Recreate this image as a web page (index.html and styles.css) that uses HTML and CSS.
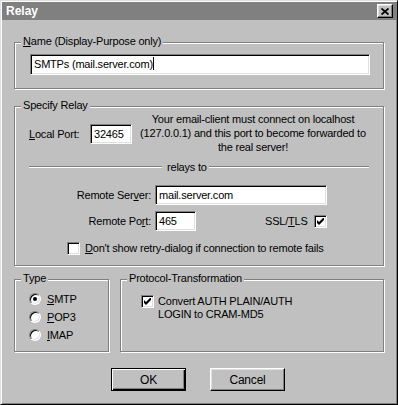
FILE: index.html
```html
<!DOCTYPE html>
<html lang="en">
<head>
    <meta charset="UTF-8">
    <title>Relay</title>
    <link rel="stylesheet" href="styles.css">
</head>
<body>
    <div class="window">
        <div class="titlebar">
            <span class="title">Relay</span>
            <div class="close">
                <svg viewBox="0 0 8 7" width="8" height="7">
                    <path d="M0.5 0.5 L7.5 6.5 M7.5 0.5 L0.5 6.5" stroke="#000" stroke-width="1.7" fill="none" />
                </svg>
            </div>
        </div>

        <div class="content">
            <!-- Name -->
            <div class="group group-name">
                <div class="legend"><u>N</u>ame (Display-Purpose only)</div>
                <div class="field field-name">SMTPs (mail.server.com)<span class="caret"></span></div>
            </div>

            <!-- Specify Relay -->
            <div class="group group-relay">
                <div class="legend">Specify Relay</div>
                <div class="local-row">
                    <div class="local-label"><u>L</u>ocal Port:</div>
                    <div class="field field-port">32465</div>
                    <div class="hint">Your email-client must connect on localhost<br>(127.0.0.1) and this port to become forwarded to<br>the real server!</div>
                </div>
                <div class="sep-row">
                    <div class="sep-line sep-left"></div>
                    <span class="sep-text">relays to</span>
                    <div class="sep-line sep-right"></div>
                </div>
                <div class="remote-row">
                    <div class="remote-label">Remote Ser<u>v</u>er:</div>
                    <div class="field field-server">mail.server.com</div>
                </div>
                <div class="remote-row port-row">
                    <div class="remote-label">Remote Po<u>r</u>t:</div>
                    <div class="field field-rport">465</div>
                    <span class="ssl-label">SSL/<u>T</u>LS</span>
                    <div class="checkbox checked">
                        <svg viewBox="0 0 7 7" width="7" height="7"><polygon points="0,2 2,4 7,-1 7,2 2,7 0,5" fill="#000" /></svg>
                    </div>
                </div>
                <div class="retry-row">
                    <div class="checkbox"></div>
                    <span class="retry-text"><u>D</u>on't show retry-dialog if connection to remote fails</span>
                </div>
            </div>

            <div class="bottom-row">
                <!-- Type -->
                <div class="group group-type">
                    <div class="legend">Type</div>
                    <div class="radios">
                        <div class="radio-row"><div class="radio selected"></div><span class="radio-text"><u>S</u>MTP</span></div>
                        <div class="radio-row"><div class="radio"></div><span class="radio-text"><u>P</u>OP3</span></div>
                        <div class="radio-row"><div class="radio"></div><span class="radio-text"><u>I</u>MAP</span></div>
                    </div>
                </div>

                <!-- Protocol-Transformation -->
                <div class="group group-proto">
                    <div class="legend">Protocol-Transformation</div>
                    <div class="proto-row">
                        <div class="checkbox checked">
                            <svg viewBox="0 0 7 7" width="7" height="7"><polygon points="0,2 2,4 7,-1 7,2 2,7 0,5" fill="#000" /></svg>
                        </div>
                        <span class="proto-text">Convert AUTH PLAIN/AUTH<br>LOGIN to CRAM-MD5</span>
                    </div>
                </div>
            </div>

            <div class="buttons">
                <div class="btn btn-default">OK</div>
                <div class="btn">Cancel</div>
            </div>
        </div>
    </div>
</body>
</html>
```

FILE: styles.css
```css
body {
    margin: 0;
    background-color: #c0c0c0;
}
.window {
    width: 398px;
    height: 405px;
    box-sizing: border-box;
    background-color: #c0c0c0;
    border: 1px solid;
    border-color: #dfdfdf #000 #000 #dfdfdf;
    padding: 1px;
    box-shadow: inset 1px 1px #fff, inset -1px -1px #808080;
    font-family: "Liberation Sans", Arial, sans-serif;
    font-size: 11px;
    letter-spacing: -0.2px;
    color: #000;
}
.titlebar {
    height: 18px;
    background-color: #808080;
    display: flex;
    align-items: center;
    justify-content: space-between;
    padding: 0 3px 0 4px;
}
.title {
    color: #fff;
    font-weight: bold;
    font-size: 12px;
    letter-spacing: 0;
}
.close {
    width: 16px;
    height: 14px;
    box-sizing: border-box;
    background-color: #c0c0c0;
    border: 1px solid;
    border-color: #fff #000 #000 #fff;
    box-shadow: inset -1px -1px #808080, inset 1px 1px #dfdfdf;
    display: flex;
    align-items: center;
    justify-content: center;
}
.content {
    padding: 22px 0 0 12px;
}
u {
    text-decoration-thickness: 1px;
    text-underline-offset: 1px;
}

/* group boxes */
.group {
    box-sizing: border-box;
    border: 1px solid #808080;
    box-shadow: inset 1px 1px #fff, 1px 1px #fff;
}
.legend {
    width: fit-content;
    margin: -8px 0 0 6px;
    padding: 0 2px;
    background-color: #c0c0c0;
    line-height: 13px;
    white-space: nowrap;
}
.field {
    box-sizing: border-box;
    height: 20px;
    background-color: #fff;
    border: 1px solid;
    border-color: #808080 #fff #fff #808080;
    box-shadow: inset 1px 1px #000, inset -1px -1px #dfdfdf;
    padding: 0 3px;
    line-height: 18px;
    white-space: nowrap;
    overflow: hidden;
}
.checkbox {
    box-sizing: border-box;
    width: 13px;
    height: 13px;
    flex-shrink: 0;
    background-color: #fff;
    border: 1px solid;
    border-color: #808080 #fff #fff #808080;
    box-shadow: inset 1px 1px #000, inset -1px -1px #dfdfdf;
    display: flex;
    align-items: center;
    justify-content: center;
}

/* name */
.group-name {
    width: 370px;
    height: 47px;
}
.field-name {
    width: 340px;
    height: 21px;
    margin: 6px 0 0 15px;
    line-height: 19px;
}
.caret {
    display: inline-block;
    width: 1px;
    height: 13px;
    background-color: #000;
    vertical-align: -2px;
}

/* specify relay */
.group-relay {
    width: 370px;
    height: 160px;
    margin-top: 17px;
}
.local-row {
    display: flex;
    margin-left: 14px;
}
.local-label {
    width: 61px;
    margin-top: 16px;
    line-height: 13px;
}
.field-port {
    width: 42px;
    margin-top: 12px;
}
.hint {
    width: 230px;
    margin-left: 6px;
    text-align: center;
    line-height: 14px;
    white-space: nowrap;
}
.sep-row {
    display: flex;
    align-items: center;
    width: 340px;
    height: 13px;
    margin: 6px 0 0 14px;
}
.sep-line {
    height: 1px;
    background-color: #808080;
    box-shadow: 0 1px #fff;
}
.sep-left {
    width: 133px;
}
.sep-right {
    flex-grow: 1;
}
.sep-text {
    margin: 0 2px 0 5px;
}
.remote-row {
    display: flex;
    align-items: center;
    margin-top: 12px;
}
.remote-label {
    width: 136px;
    margin-right: 4px;
    text-align: right;
}
.field-server {
    width: 172px;
}
.port-row {
    margin-top: 6px;
}
.field-rport {
    width: 41px;
}
.ssl-label {
    margin-left: 69px;
}
.port-row .checkbox {
    margin-left: 6px;
}
.retry-row {
    display: flex;
    align-items: center;
    margin: 11px 0 0 52px;
    line-height: 13px;
}
.retry-text {
    margin-left: 5px;
}

/* type + protocol */
.bottom-row {
    display: flex;
    gap: 11px;
    margin-top: 13px;
}
.group-type {
    width: 95px;
    height: 73px;
}
.radios {
    margin-top: 5px;
}
.radio-row {
    display: flex;
    align-items: center;
    height: 18px;
    padding-left: 14px;
}
.radio {
    box-sizing: border-box;
    width: 12px;
    height: 12px;
    border-radius: 50%;
    background-color: #fff;
    border: 1px solid;
    border-color: #808080 #fff #fff #808080;
    box-shadow: inset 1px 1px #000, inset -1px -1px #dfdfdf;
    display: flex;
    align-items: center;
    justify-content: center;
}
.radio.selected::after {
    content: "";
    width: 4px;
    height: 4px;
    border-radius: 50%;
    background-color: #000;
}
.radio-text {
    margin-left: 6px;
}
.group-proto {
    width: 264px;
    height: 73px;
}
.proto-row {
    display: flex;
    align-items: flex-start;
    margin: 10px 0 0 20px;
}
.proto-text {
    margin-left: 4px;
    line-height: 13px;
}

/* buttons */
.buttons {
    display: flex;
    gap: 24px;
    margin: 16px 0 0 97px;
}
.btn {
    box-sizing: border-box;
    width: 75px;
    height: 23px;
    border: 1px solid;
    border-color: #fff #000 #000 #fff;
    box-shadow: inset -1px -1px #808080, inset 1px 1px #dfdfdf;
    display: flex;
    align-items: center;
    justify-content: center;
    font-size: 12px;
}
.btn-default {
    border-color: #000;
    box-shadow: inset 1px 1px #fff, inset -1px -1px #000, inset -2px -2px #808080;
}
```
